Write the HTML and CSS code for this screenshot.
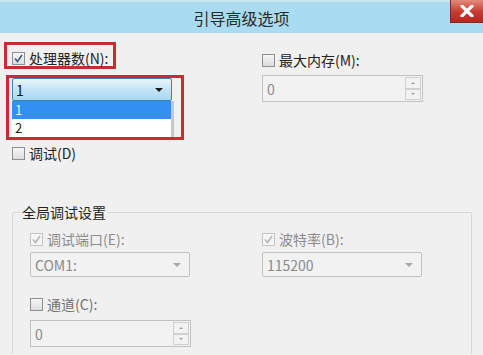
FILE: index.html
```html
<!DOCTYPE html>
<html lang="zh-CN">
<head>
  <meta charset="UTF-8">
  <title>引导高级选项</title>
  <meta name="viewport" content="width=device-width, initial-scale=1.0">
  <link rel="stylesheet" href="styles.css">
</head>
<body>

  <div class="titlebar">
    <span></span>
    <span class="title">引导高级选项</span>
    <span class="close">
      <svg width="14" height="12" viewBox="0 0 14 12"><path d="M2 1 L12 11 M12 1 L2 11" stroke="#fff" stroke-width="3.2" stroke-linecap="round"/></svg>
    </span>
  </div>

  <div class="content">
    <div class="top">
      <div class="col-left">
        <div class="mark mark-cpu">
          <div class="opt">
            <span class="cb"><svg width="11" height="11" viewBox="0 0 11 11"><path d="M2 5.5 L4.5 8.5 L9 2" fill="none" stroke="#3d5a80" stroke-width="1.6"/></svg></span>
            处理器数(N):
          </div>
        </div>
        <div class="mark mark-list">
          <div class="combo active">
            <span>1</span>
            <span class="arrow"></span>
          </div>
          <div class="list">
            <div class="item selected">1</div>
            <div class="item">2</div>
          </div>
        </div>
        <div class="opt debug">
          <span class="cb"></span>
          调试(D)
        </div>
      </div>
      <div class="col-right">
        <div class="opt">
          <span class="cb"></span>
          最大内存(M):
        </div>
        <div class="spin">
          <span>0</span>
          <span class="spin-btns"><span class="up"></span><span class="down"></span></span>
        </div>
      </div>
    </div>

    <div class="group">
      <div class="group-title">全局调试设置</div>
      <div class="group-grid">
        <div class="cell">
          <div class="opt disabled">
            <span class="cb"><svg width="11" height="11" viewBox="0 0 11 11"><path d="M2 5.5 L4.5 8.5 L9 2" fill="none" stroke="#b0b0b0" stroke-width="1.4"/></svg></span>
            调试端口(E):
          </div>
          <div class="combo">
            <span>COM1:</span>
            <span class="arrow"></span>
          </div>
        </div>
        <div class="cell">
          <div class="opt disabled">
            <span class="cb"><svg width="11" height="11" viewBox="0 0 11 11"><path d="M2 5.5 L4.5 8.5 L9 2" fill="none" stroke="#b0b0b0" stroke-width="1.4"/></svg></span>
            波特率(B):
          </div>
          <div class="combo">
            <span>115200</span>
            <span class="arrow"></span>
          </div>
        </div>
        <div class="cell cell-channel">
          <div class="opt muted">
            <span class="cb"></span>
            通道(C):
          </div>
          <div class="spin">
            <span>0</span>
            <span class="spin-btns"><span class="up"></span><span class="down"></span></span>
          </div>
        </div>
      </div>
    </div>
  </div>

</body>
</html>
```

FILE: styles.css
```css
body {
  margin: 0;
  width: 483px;
  height: 355px;
  overflow: hidden;
  background-color: #f0f0f0;
  font-family: "Noto Sans CJK SC", "Noto Sans", sans-serif;
  font-size: 14px;
  color: #222;
}
.titlebar {
  display: grid;
  grid-template-columns: 1fr auto 1fr;
  height: 31px;
  background-color: #a9dcf1;
  border-top: 2px solid #c8e8f6;
}
.title {
  align-self: center;
  font-size: 16px;
  line-height: 20px;
  color: #2a2a2a;
}
.close {
  justify-self: end;
  align-self: start;
  width: 32px;
  height: 22px;
  margin-top: -2px;
  display: flex;
  align-items: center;
  justify-content: center;
  background: linear-gradient(#e58b7d, #c8392e 55%, #b8281f);
  border-left: 1px solid #7e2a22;
  border-bottom: 1px solid #7e2a22;
}
.content {
  padding-left: 12px;
}
.top {
  display: flex;
  margin-top: 9px;
}
.col-left {
  width: 250px;
}
.col-right {
  padding-top: 11px;
}
.opt {
  display: flex;
  align-items: center;
  gap: 4px;
  line-height: 15px;
  white-space: nowrap;
}
.cb {
  width: 11px;
  height: 11px;
  border: 1px solid #8f8f8f;
  background: linear-gradient(#f6f6f6, #dcdcdc);
  display: flex;
  flex-shrink: 0;
}
.disabled {
  color: #8c8c8c;
}
.disabled .cb {
  border-color: #c4c4c4;
  background: #f5f5f5;
}
.muted {
  color: #707070;
}
.mark {
  border: 3px solid #cc2a30;
  box-sizing: border-box;
}
.mark-cpu {
  width: 112px;
  margin-left: -8px;
  padding: 6px 0 0 5px;
}
.mark-list {
  width: 178px;
  margin-top: 6px;
  margin-left: -6px;
  padding: 0 7px 0 3px;
}
.combo {
  display: flex;
  align-items: center;
  justify-content: space-between;
  box-sizing: border-box;
  width: 160px;
  height: 25px;
  padding: 0 8px 0 4px;
  border: 1px solid #c2c2c2;
  border-radius: 2px;
  background-color: #f2f2f2;
  color: #8a8a8a;
  line-height: 16px;
}
.combo .arrow {
  border-left: 4px solid transparent;
  border-right: 4px solid transparent;
  border-top: 4px solid #a8a8a8;
}
.combo.active {
  height: 23px;
  padding-left: 3px;
  border-color: #3c7fb1;
  background: linear-gradient(#ecf6fc, #c2e4f6 50%, #a9d8f0);
  color: #111;
}
.combo.active .arrow {
  border-top-color: #1a1a1a;
}
.list {
  width: 162px;
  border-right: 3px solid #c8c8c8;
  box-sizing: border-box;
  background-color: #fff;
  font-size: 13px;
}
.item {
  height: 18px;
  line-height: 18px;
  padding-left: 3px;
}
.item.selected {
  background-color: #3390f0;
  color: #dff0ff;
}
.debug {
  margin-top: 6px;
}
.spin {
  display: flex;
  justify-content: space-between;
  box-sizing: border-box;
  width: 161px;
  height: 27px;
  margin-top: 7px;
  border: 1px solid #c2c2c2;
  background-color: #f2f2f2;
  color: #8a8a8a;
}
.spin > span:first-child {
  align-self: center;
  padding-left: 4px;
  line-height: 16px;
}
.spin-btns {
  display: flex;
  flex-direction: column;
  width: 16px;
  padding: 1px;
}
.spin-btns span {
  flex: 1;
  border: 1px solid #d0d0d0;
  display: flex;
  align-items: center;
  justify-content: center;
}
.spin-btns .up::after {
  content: "";
  border-left: 2px solid transparent;
  border-right: 2px solid transparent;
  border-bottom: 2px solid #a0a0a0;
}
.spin-btns .down::after {
  content: "";
  border-left: 2px solid transparent;
  border-right: 2px solid transparent;
  border-top: 2px solid #a0a0a0;
}
.group {
  box-sizing: border-box;
  width: 460px;
  height: 142px;
  margin-top: 51px;
  padding-left: 17px;
  border: 1px solid #d8d8d8;
  border-bottom: none;
  border-radius: 2px 2px 0 0;
}
.group-title {
  width: fit-content;
  margin-top: -9px;
  margin-left: -9px;
  padding: 0 1px;
  line-height: 16px;
  background-color: #f0f0f0;
  color: #222;
}
.group-grid {
  display: grid;
  grid-template-columns: 232px 161px;
}
.cell .opt {
  margin-top: 12px;
}
.cell .combo {
  margin-top: 5px;
}
.cell-channel .opt {
  margin-top: 20px;
}
.cell-channel .spin {
  margin-top: 8px;
}
```
